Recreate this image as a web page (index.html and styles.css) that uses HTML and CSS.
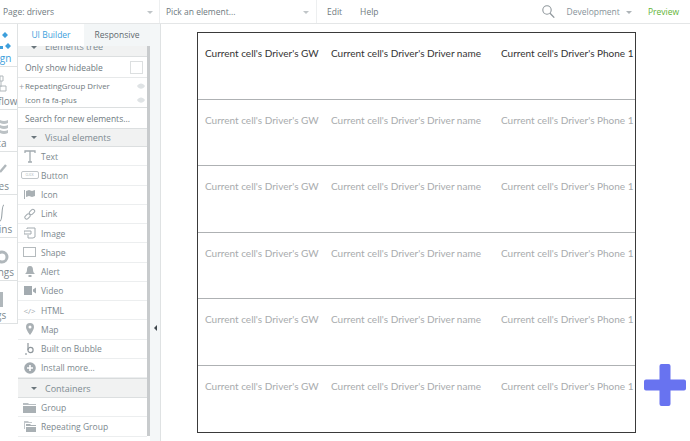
FILE: index.html
```html
<!DOCTYPE html>
<html lang="en">
<head>
<meta charset="utf-8">
<title>Page: drivers</title>
<link rel="stylesheet" href="styles.css">
</head>
<body>
<header class="topbar">
  <div class="picker picker-page"><span>Page: drivers</span><i class="caret"></i></div>
  <div class="picker picker-el"><span>Pick an element...</span><i class="caret"></i></div>
  <nav class="menu"><span>Edit</span><span>Help</span></nav>
  <div class="top-right">
    <svg class="search" width="13" height="13" viewBox="0 0 13 13"><circle cx="5" cy="5" r="4.200" fill="none" stroke="#8f979c" stroke-width="1.100"/><path d="M8 8.300l4.300 4.300" stroke="#8f979c" stroke-width="1.300"/></svg>
    <span class="dev">Development</span><i class="caret dev-caret"></i>
    <span class="preview">Preview</span>
  </div>
</header>
<div class="main">
  <aside class="rail">
    <div class="rail-item first"><svg width="14" height="20" viewBox="0 0 14 20"><path d="M2 3l3-3 3 3-3 3zM5 14l3-3 3 3-3 3zM0 14h3v3H0z" fill="#3d9fdc"/></svg><span>Design</span></div>
    <div class="rail-item"><svg width="14" height="20" viewBox="0 0 14 20"><path d="M0 1h3v5H0zM1 6v6M0 11h6v5H0z" fill="none" stroke="#b0b7bb"/></svg><span>Workflow</span></div>
    <div class="rail-item"><svg width="10" height="20" viewBox="0 0 10 20"><path d="M0 2q4 2 8 0v3q-4 2-8 0zM0 7q4 2 8 0v3q-4 2-8 0zM0 12q4 2 8 0v3q-4 2-8 0z" fill="#bcc2c5"/></svg><span>Data</span></div>
    <div class="rail-item"><svg width="12" height="20" viewBox="0 0 12 20"><path d="M0 12l6-7" stroke="#b0b7bb" stroke-width="2.400" fill="none"/></svg><span>Styles</span></div>
    <div class="rail-item"><svg width="12" height="20" viewBox="0 0 12 20"><path d="M0 18c3 0 1-16 4-16" stroke="#9aa3a8" stroke-width="1.100" fill="none"/></svg><span>Plugins</span></div>
    <div class="rail-item"><svg width="14" height="20" viewBox="0 0 14 20"><circle cx="2" cy="11" r="5" fill="none" stroke="#b0b7bb" stroke-width="3"/></svg><span>Settings</span></div>
    <div class="rail-item"><svg width="14" height="20" viewBox="0 0 14 20"><path d="M0 3h3v15H0z" fill="#b0b7bb"/></svg><span>Logs</span></div>
  </aside>
  <section class="panel">
    <div class="tabs"><div class="tab active">UI Builder</div><div class="tab">Responsive</div></div>
    <div class="list">
      <div class="head head-tree"><i class="tri"></i>Elements tree</div>
      <div class="hideable"><span>Only show hideable</span><i class="check"></i></div>
      <div class="tree">
        <div class="tree-row"><b class="plus">+</b><span>RepeatingGroup Driver</span><svg class="eye" width="8" height="6" viewBox="0 0 8 6"><path d="M0 3c2-3.500 6-3.500 8 0-2 3.500-6 3.500-8 0z" fill="#dfe3e5"/></svg></div>
        <div class="tree-row"><span>Icon fa fa-plus</span><svg class="eye" width="8" height="6" viewBox="0 0 8 6"><path d="M0 3c2-3.500 6-3.500 8 0-2 3.500-6 3.500-8 0z" fill="#dfe3e5"/></svg></div>
      </div>
      <div class="search-row">Search for new elements...</div>
      <div class="head"><i class="tri"></i>Visual elements</div>
      <div class="row"><span class="ic"><svg width="12" height="13" viewBox="0 0 12 13"><path d="M1 3V1h10v2M6 1v11M4 12h4" fill="none" stroke="#a3abb0" stroke-width="1.300"/></svg></span>Text</div>
      <div class="row"><span class="ic"><span class="btn-ic">CLICK</span></span>Button</div>
      <div class="row"><span class="ic"><svg width="11" height="9" viewBox="0 0 11 9"><path d="M0 0h1v9H0zM2 1l3-1 3 1 3-1v6l-3 1-3-1-3 1z" fill="#a9b0b4"/></svg></span>Icon</div>
      <div class="row"><span class="ic"><svg width="12" height="12" viewBox="0 0 12 12"><g fill="none" stroke="#a3abb0" stroke-width="1"><rect x="-3" y="-1.800" width="6" height="3.600" rx="1.800" transform="translate(3.500 8.500) rotate(-45)"/><rect x="-3" y="-1.800" width="6" height="3.600" rx="1.800" transform="translate(8 4) rotate(-45)"/></g></svg></span>Link</div>
      <div class="row"><span class="ic"><svg width="12" height="12" viewBox="0 0 12 12"><path d="M3 2V1h8v9l-2 1H4V8" fill="none" stroke="#a3abb0"/><path d="M0 4h7v3H0z" fill="none" stroke="#a3abb0"/></svg></span>Image</div>
      <div class="row"><span class="ic"><i class="shape-ic"></i></span>Shape</div>
      <div class="row"><span class="ic"><svg width="10" height="11" viewBox="0 0 10 11"><path d="M5 0c2.500 0 3 2 3 4 0 2 1 3 2 4H0c1-1 2-2 2-4 0-2 .5-4 3-4zM3.500 9h3v2h-3z" fill="#a9b0b4"/></svg></span>Alert</div>
      <div class="row"><span class="ic"><svg width="12" height="9" viewBox="0 0 12 9"><path d="M0 0h8v9H0zM9 3.500l3-2v6l-3-2z" fill="#a3abb0"/></svg></span>Video</div>
      <div class="row"><span class="ic ic-code">&lt;/&gt;</span>HTML</div>
      <div class="row"><span class="ic"><svg width="8" height="12" viewBox="0 0 8 12"><path fill-rule="evenodd" d="M4 0a4 4 0 0 1 4 4c0 3-4 8-4 8S0 7 0 4a4 4 0 0 1 4-4zm0 2.500a1.500 1.500 0 1 0 0 3 1.500 1.500 0 0 0 0-3z" fill="#a9b0b4"/></svg></span>Map</div>
      <div class="row"><span class="ic"><svg width="9" height="12" viewBox="0 0 9 12"><path d="M3 0v7" stroke="#8f979c" stroke-width="1.200"/><circle cx="5.500" cy="7" r="2.600" fill="none" stroke="#8f979c" stroke-width="1.200"/><circle cx="1" cy="11" r="1" fill="#a9b0b4"/></svg></span>Built on Bubble</div>
      <div class="row"><span class="ic"><svg width="12" height="12" viewBox="0 0 12 12"><circle cx="6" cy="6" r="5.800" fill="#a3abb0"/><path d="M6 3v6M3 6h6" stroke="#fff" stroke-width="1.600"/></svg></span>Install more...</div>
      <div class="head head-c"><i class="tri"></i>Containers</div>
      <div class="row"><span class="ic"><svg width="13" height="11" viewBox="0 0 13 11"><path d="M0 1h5l1 1h7v1H0z" fill="#b8bec2"/><path d="M0 4h13v7H0z" fill="#a9b0b4"/></svg></span>Group</div>
      <div class="row"><span class="ic"><svg width="12" height="11" viewBox="0 0 12 11"><path d="M0 0h4l1 1h3v1H1v6H0z" fill="#c2c7cb"/><path d="M2 3h4l1 1h5v1H2zM2 6h10v5H2z" fill="#a9b0b4"/></svg></span>Repeating Group</div>
    </div>
    <div class="scroll"></div>
  </section>
  <div class="strip"><i class="tri-left"></i></div>
  <main class="canvas">
    <div class="rg">
      <div class="cell first-cell"><span class="c1">Current cell's Driver's GW</span><span class="c2">Current cell's Driver's Driver name</span><span class="c3">Current cell's Driver's Phone 1</span></div>
      <div class="cell"><span class="c1">Current cell's Driver's GW</span><span class="c2">Current cell's Driver's Driver name</span><span class="c3">Current cell's Driver's Phone 1</span></div>
      <div class="cell"><span class="c1">Current cell's Driver's GW</span><span class="c2">Current cell's Driver's Driver name</span><span class="c3">Current cell's Driver's Phone 1</span></div>
      <div class="cell"><span class="c1">Current cell's Driver's GW</span><span class="c2">Current cell's Driver's Driver name</span><span class="c3">Current cell's Driver's Phone 1</span></div>
      <div class="cell"><span class="c1">Current cell's Driver's GW</span><span class="c2">Current cell's Driver's Driver name</span><span class="c3">Current cell's Driver's Phone 1</span></div>
      <div class="cell"><span class="c1">Current cell's Driver's GW</span><span class="c2">Current cell's Driver's Driver name</span><span class="c3">Current cell's Driver's Phone 1</span></div>
    </div>
    <svg class="fab" width="42" height="42" viewBox="0 0 42 42"><path d="M17.500 0h7a2 2 0 0 1 2 2V15.500H40a2 2 0 0 1 2 2v7a2 2 0 0 1-2 2H26.500V40a2 2 0 0 1-2 2h-7a2 2 0 0 1-2-2V26.500H2a2 2 0 0 1-2-2v-7a2 2 0 0 1 2-2H15.500V2a2 2 0 0 1 2-2z" fill="#6873f0"/></svg>
  </main>
</div>
</body>
</html>
```

FILE: styles.css
```css
* { box-sizing: border-box; }
html, body { margin: 0; padding: 0; }
body {
  width: 690px;
  height: 441px;
  overflow: hidden;
  background: #fff;
  font-family: "Open Sans", "Liberation Sans", sans-serif;
  color: #6f7a80;
}
.topbar {
  display: flex;
  height: 24px;
  align-items: stretch;
  background: #fff;
  border-bottom: 1px solid #e4e6e7;
  font-size: 8.500px;
}
.picker {
  display: flex;
  align-items: center;
  justify-content: space-between;
  padding: 0 0 0 3px;
  border-right: 1px solid #edeff0;
}
.picker-page { width: 160px; padding-right: 6px; }
.picker-el { width: 157px; padding-left: 6px; padding-right: 7px; }
.caret {
  display: block;
  width: 0;
  height: 0;
  margin-top: 2px;
  border-left: 3px solid transparent;
  border-right: 3px solid transparent;
  border-top: 3px solid #c0c5c8;
}
.menu { display: flex; align-items: center; gap: 18px; padding-left: 10px; }
.top-right {
  margin-left: auto;
  display: flex;
  align-items: center;
  padding-right: 11px;
  color: #87939a;
}
.search { margin-right: 12px; }
.dev-caret { margin: 2px 0 0 6px; border-top-color: #aeb4b8; }
.preview { margin-left: 16px; color: #5fb336; }
.main { display: flex; height: 417px; }
.rail { width: 18px; flex: none; overflow: hidden; background: #fff; }
.rail-item {
  position: relative;
  width: 18px;
  height: 42.800px;
  border-bottom: 1px solid #dfe2e3;
  border-right: 1px solid #dfe2e3;
  padding-top: 8px;
  overflow: hidden;
  white-space: nowrap;
  font-size: 10px;
  color: #7d888e;
}
.rail-item svg { display: block; }
.rail-item span { position: absolute; left: -4.500px; bottom: 1px; transform: translateX(-50%); }
.rail-item.first { color: #3d9fdc; }
.panel {
  position: relative;
  width: 132px;
  flex: none;
  background: #fff;
  overflow: hidden;
}
.tabs { display: flex; height: 22px; font-size: 8.500px; text-align: center; }
.tab { line-height: 22px; background: #f3f6f7; color: #5f696e; flex: 1; }
.tab.active { background: #fff; color: #3d9fdc; flex: none; width: 66px; }
.list { width: 129px; font-size: 8.500px; }
.head {
  display: flex;
  align-items: center;
  height: 19px;
  background: #f1f2f2;
  border-top: 1px solid #dcdfe0;
  border-bottom: 1px solid #dcdfe0;
  padding-left: 13px;
  font-size: 9px;
  color: #7d8a91;
}
.head-tree {
  height: 11px;
  border-top: 0;
  overflow: hidden;
  align-items: flex-end;
  padding-bottom: 3px;
  line-height: 13px;
}
.head-tree .tri { margin-bottom: 4px; }
.tri {
  display: block;
  width: 0;
  height: 0;
  margin-right: 8px;
  border-left: 3px solid transparent;
  border-right: 3px solid transparent;
  border-top: 3px solid #6b767c;
}
.hideable {
  display: flex;
  align-items: center;
  justify-content: space-between;
  height: 21px;
  padding: 0 4px 0 7px;
  border-bottom: 1px solid #e7e9ea;
}
.check { display: block; width: 13px; height: 13px; border: 1px solid #dcdfe0; }
.tree { padding-top: 1px; border-bottom: 1px solid #dcdfe0; height: 30px; }
.tree-row { position: relative; display: flex; align-items: center; height: 14px; padding-left: 7px; font-size: 7.900px; }
.plus { position: absolute; left: 1px; font-weight: 400; color: #9aa3a8; font-size: 9px; }
.eye { margin-left: auto; margin-right: 2px; }
.search-row { display: flex; align-items: center; height: 20px; padding-left: 7px; color: #6f7a80; }
.row {
  display: flex;
  align-items: center;
  height: 19.250px;
  border-bottom: 1px solid #eceeef;
  color: #7d888e;
}
.ic { display: flex; justify-content: center; align-items: center; width: 23px; flex: none; }
.btn-ic {
  display: block;
  flex: none;
  width: 18px;
  height: 8px;
  border: 1px solid #c1c6c9;
  border-radius: 2px;
  font-size: 3px;
  line-height: 6px;
  text-align: center;
  color: #a3abb0;
}
.shape-ic { display: block; width: 13px; height: 10px; border: 1px solid #b4babd; }
.ic-code { font-size: 8px; color: #a3abb0; }
.head-c { height: 20px; border-top: 1px solid #d8dbdc; }
.scroll { position: absolute; left: 129px; top: 22px; width: 3px; height: 390px; background: #c8cbcd; }
.strip {
  position: relative;
  width: 11px;
  flex: none;
  background: #f4f7f8;
  border-right: 1px solid #dfe2e3;
}
.tri-left {
  position: absolute;
  left: 4px;
  top: 301px;
  width: 0;
  height: 0;
  border-top: 3px solid transparent;
  border-bottom: 3px solid transparent;
  border-right: 3px solid #3e474c;
}
.canvas { position: relative; flex: 1; padding: 8px 0 0 36px; background: #fff; }
.rg {
  width: 439px;
  height: 401px;
  border: 1px solid #3a3a3a;
  overflow: hidden;
}
.cell {
  display: flex;
  height: 66.600px;
  padding-top: 14px;
  border-bottom: 1px solid #aeb1b3;
  font-family: Lato, "Liberation Sans", sans-serif;
  font-size: 10px;
  line-height: 13px;
  color: #a8abad;
  white-space: nowrap;
}
.cell:last-child { border-bottom: 0; }
.first-cell { color: #333; }
.c1 { width: 133px; padding-left: 7px; flex: none; }
.c2 { width: 170px; flex: none; }
.c3 { flex: none; }
.fab { position: absolute; left: 483px; top: 340px; }
```
